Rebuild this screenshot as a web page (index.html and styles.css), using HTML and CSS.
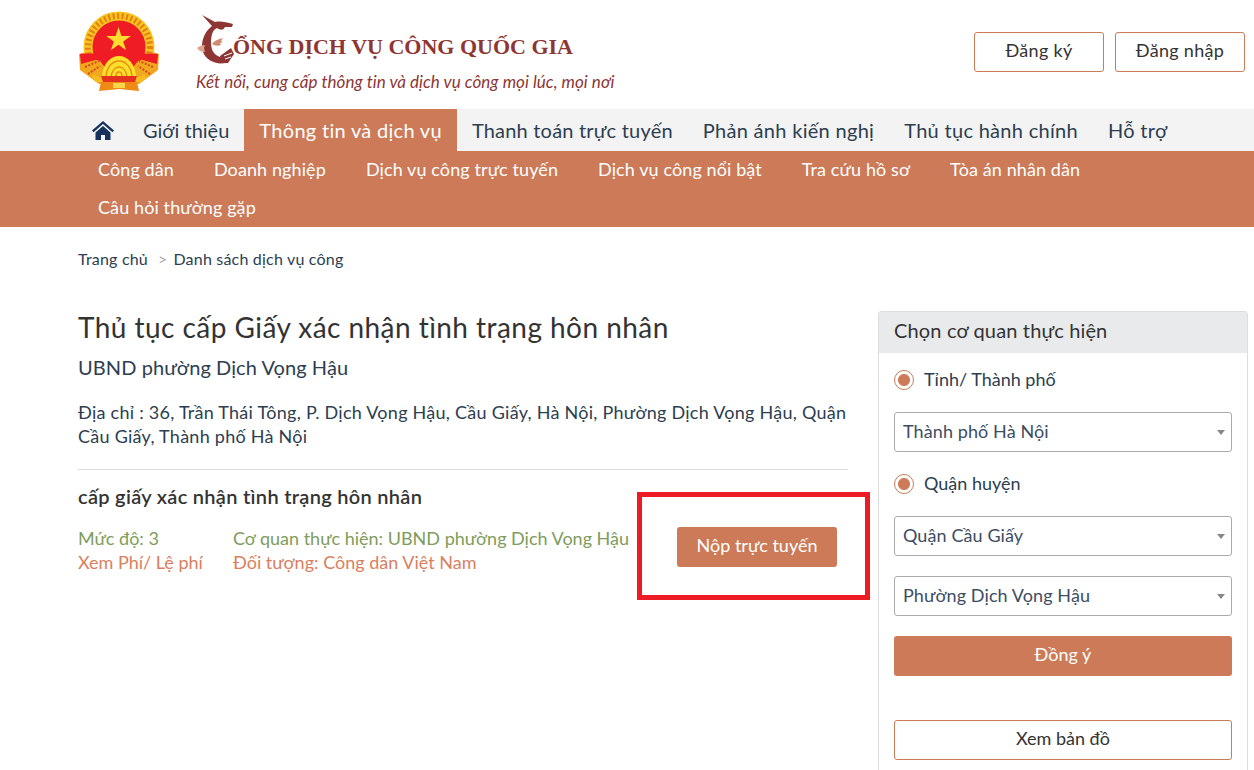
FILE: index.html
```html
<!DOCTYPE html>
<html lang="vi">
<head>
  <meta charset="UTF-8" />
  <title>Cổng dịch vụ công quốc gia</title>
  <link rel="stylesheet" href="styles.css">
</head>
<body>
  <header class="header">
    <div class="brand">
      <svg class="emblem" width="88" height="88" viewBox="0 -4 88 88">
        <path d="M24 72L5 58 4 42l10-3 60 0 10 3-1 16-19 14z" fill="#f2a51c"/>
        <circle cx="44" cy="35" r="31" fill="#ef1c25"/>
        <circle cx="44" cy="35" r="31" fill="none" stroke="#f7c51e" stroke-width="9"/>
        <circle cx="44" cy="35" r="31" fill="none" stroke="#e67d16" stroke-width="6" stroke-dasharray="2 2.500"/>
        <path d="M43.500 15l2.900 8.900h9.400l-7.600 5.500 2.900 8.900-7.600-5.500-7.600 5.500 2.900-8.900-7.600-5.500h9.400z" fill="#ffdc2e"/>
        <path d="M5 42l20 7 7 9-8 12-7-4L6 56z" fill="#f0a81e"/>
        <path d="M83 42l-20 7-7 9 8 12 7-4 11-10z" fill="#f0a81e"/>
        <path d="M5 42c8-1 18 0 27-2l-8 7-18 5z" fill="#ef1c25"/>
        <path d="M83 42c-8-1-18 0-27-2l8 7 18 5z" fill="#ef1c25"/>
        <path d="M10 55l14-6M13 62l12-8M78 55l-14-6M75 62l-12-8" stroke="#d9481a" stroke-width="2" stroke-dasharray="2 1.500"/>
        <g transform="translate(0 -4)">
          <path d="M27 68c1-12 8-20 17-20s16 8 17 20z" fill="#fbe02a"/>
          <path d="M31 68c1-9 6-15 13-15s12 6 13 15" fill="none" stroke="#ed8a18" stroke-width="1.500"/>
          <path d="M36 68c1-5 4-9 8-9s7 4 8 9" fill="none" stroke="#ed8a18" stroke-width="1.500"/>
          <path d="M41 68c0-2 1-4 3-4s3 2 3 4" fill="none" stroke="#ed8a18" stroke-width="1.500"/>
          <path d="M19 66c2 3 6 3 9 3h32c3 0 7 0 9-3l2 4c-2 4-6 4-9 4H26c-3 0-7 0-9-4z" fill="#f6bc20"/>
          <path d="M26 68h36l-2 6H28z" fill="#e3301f"/>
          <path d="M26 74h36l2 9-20-2-20 2z" fill="#f08a17"/>
          <path d="M38 75h12v5H38z" fill="#f7d64a"/>
        </g>
      </svg>
      <div class="brand-text">
        <div class="brand-name">
          <svg class="brand-mark" width="60" height="55" viewBox="0 0 60 55">
            <path d="M7 5l13 7c5-1 11 0 18 2l-1 3-7 0c-2 4-5 3-8 1-5 2-6 9-6 15 0 7 3 12 9 14l4 4 2 2C20 55 11 50 8 42 5 33 9 22 17 16z" fill="#8d3634"/>
            <path d="M25 46l11-8 3 6-6 9-7 0z" fill="#8d3634"/>
            <path d="M29 46l8-3M30 49l6-2" stroke="#fff" stroke-width="1"/>
            <path d="M2 38c2-2 5-3 8-3l-1 3 1 4c-3 0-6-1-8-4z" fill="#dca58d"/>
            <path d="M17 34c2-3 6-5 11-6l-2 3 2 1-3 1 1 2c-3 1-6 1-9-1z" fill="#cf8c73"/>
          </svg>
          <span class="brand-title">ỔNG DỊCH VỤ CÔNG QUỐC GIA</span>
        </div>
        <div class="brand-sub">Kết nối, cung cấp thông tin và dịch vụ công mọi lúc, mọi nơi</div>
      </div>
    </div>
    <div class="auth">
      <a href="#" class="btn-outline">Đăng ký</a>
      <a href="#" class="btn-outline">Đăng nhập</a>
    </div>
  </header>

  <nav class="nav">
    <a href="#" class="nav-home">
      <svg width="22" height="19" viewBox="0 0 22 19">
        <path d="M11 0L0 9.500l1.500 1.700L11 3l9.500 8.200L22 9.500z" fill="#16325c"/>
        <path d="M11 5L3.500 11.400V19H9v-5h4v5h5.500v-7.600z" fill="#16325c"/>
      </svg>
    </a>
    <a href="#" class="nav-item nav-first">Giới thiệu</a>
    <a href="#" class="nav-item active">Thông tin và dịch vụ</a>
    <a href="#" class="nav-item nav-tight">Thanh toán trực tuyến</a>
    <a href="#" class="nav-item">Phản ánh kiến nghị</a>
    <a href="#" class="nav-item">Thủ tục hành chính</a>
    <a href="#" class="nav-item">Hỗ trợ</a>
  </nav>

  <div class="subnav">
    <a href="#">Công dân</a>
    <a href="#">Doanh nghiệp</a>
    <a href="#">Dịch vụ công trực tuyến</a>
    <a href="#">Dịch vụ công nổi bật</a>
    <a href="#">Tra cứu hồ sơ</a>
    <a href="#">Tòa án nhân dân</a>
    <a href="#">Câu hỏi thường gặp</a>
  </div>

  <div class="breadcrumb">
    <a href="#">Trang chủ</a>
    <span class="sep">&gt;</span>
    <a href="#">Danh sách dịch vụ công</a>
  </div>

  <div class="content">
    <main class="detail">
      <h1>Thủ tục cấp Giấy xác nhận tình trạng hôn nhân</h1>
      <div class="agency">UBND phường Dịch Vọng Hậu</div>
      <p class="address">Địa chỉ : 36, Trần Thái Tông, P. Dịch Vọng Hậu, Cầu Giấy, Hà Nội, Phường Dịch Vọng Hậu, Quận Cầu Giấy, Thành phố Hà Nội</p>
      <h2>cấp giấy xác nhận tình trạng hôn nhân</h2>
      <div class="service">
        <div class="service-info">
          <span class="green">Mức độ: 3</span>
          <span class="green">Cơ quan thực hiện: UBND phường Dịch Vọng Hậu</span>
          <a href="#" class="orange">Xem Phí/ Lệ phí</a>
          <span class="orange">Đối tượng: Công dân Việt Nam</span>
        </div>
        <button class="btn-submit">Nộp trực tuyến</button>
      </div>
      <div class="highlight"></div>
    </main>

    <aside class="sidebar">
      <div class="sidebar-head">Chọn cơ quan thực hiện</div>
      <div class="sidebar-body">
        <label class="radio"><span class="radio-dot"></span>Tỉnh/ Thành phố</label>
        <div class="select">Thành phố Hà Nội</div>
        <label class="radio"><span class="radio-dot"></span>Quận huyện</label>
        <div class="select">Quận Cầu Giấy</div>
        <div class="select">Phường Dịch Vọng Hậu</div>
        <button class="btn-agree">Đồng ý</button>
        <button class="btn-map">Xem bản đồ</button>
      </div>
    </aside>
  </div>
</body>
</html>
```

FILE: styles.css
```css
* {
  box-sizing: border-box;
}

html,
body {
  height: 770px;
  overflow: hidden;
}

body {
  margin: 0;
  font-family: "Lato", "Noto Sans", sans-serif;
  font-size: 18px;
  background: #fff;
  color: #2c3e50;
}

a {
  color: inherit;
  text-decoration: none;
}

.header {
  height: 109px;
  display: flex;
  justify-content: space-between;
  padding: 8px 9px 0 75px;
}

.brand {
  display: flex;
}

.emblem {
  margin-right: 32px;
}

.brand-text {
  padding-top: 2px;
}

.brand-name {
  display: flex;
  align-items: flex-start;
  height: 55px;
  color: #8d3634;
}

.brand-mark {
  margin-right: -22px;
}

.brand-title {
  margin-top: 20px;
  font-family: "Liberation Serif", serif;
  font-weight: 700;
  font-size: 22px;
  line-height: 34px;
}

.brand-sub {
  margin: 5px 0 0 1px;
  font-style: italic;
  font-size: 17px;
  line-height: 24px;
  letter-spacing: 0.05px;
  color: #8d3634;
}

.auth {
  display: flex;
  gap: 11px;
  padding-top: 24px;
}

.btn-outline {
  width: 130px;
  height: 40px;
  border: 1px solid #cc7a58;
  border-radius: 3px;
  color: #333;
  line-height: 35px;
  letter-spacing: 0.3px;
  text-align: center;
}

.nav {
  height: 42px;
  display: flex;
  align-items: stretch;
  padding-left: 92px;
  background: #f3f3f3;
  font-size: 20px;
}

.nav-home {
  display: flex;
  align-items: center;
  width: 36px;
}

.nav-item {
  padding: 0 15px;
  line-height: 42px;
  letter-spacing: 0.3px;
}

.nav-first {
  letter-spacing: 0;
}

.nav-tight {
  letter-spacing: 0.2px;
}

.nav-item.active {
  background: #cc7a58;
  color: #fff;
}

.subnav {
  height: 76px;
  display: flex;
  flex-wrap: wrap;
  align-content: flex-start;
  gap: 0 40px;
  padding: 0 150px 0 98px;
  background: #cc7a58;
  color: #fff;
  letter-spacing: 0.1px;
}

.subnav a {
  margin: -1px 0 1px;
  line-height: 38px;
}

.breadcrumb {
  padding: 22px 78px 0;
  font-size: 16px;
  line-height: 20px;
  letter-spacing: 0.2px;
  display: flex;
  gap: 10px;
}

.breadcrumb .sep {
  margin-right: -4px;
  color: #aaa;
}

.content {
  display: flex;
  align-items: flex-start;
  gap: 30px;
  padding: 42px 6px 0 78px;
}

.detail {
  position: relative;
  width: 770px;
}

h1 {
  margin: -2px 0 0;
  font-size: 28px;
  font-weight: 400;
  line-height: 36px;
  letter-spacing: 0.45px;
  color: #333;
}

.agency {
  margin-top: 9px;
  font-size: 20px;
  line-height: 26px;
  letter-spacing: 0.08px;
}

.address {
  margin: 20px 0 0;
  padding-bottom: 21px;
  border-bottom: 1px solid #ddd;
  line-height: 24px;
  letter-spacing: 0.26px;
}

h2 {
  margin: 14px 0 0;
  font-size: 20px;
  font-weight: 600;
  line-height: 24px;
  letter-spacing: 0.3px;
  color: #333;
}

.service {
  display: flex;
  align-items: flex-start;
  margin-top: 18px;
}

.service-info {
  display: grid;
  grid-template-columns: 155px 1fr;
  width: 552px;
  line-height: 24px;
  white-space: nowrap;
}

.green {
  color: #7e9c5c;
}

.orange {
  color: #d9805f;
}

.btn-submit {
  width: 160px;
  height: 40px;
  margin: 1px 0 0 47px;
  padding-bottom: 5px;
  border: none;
  border-radius: 3px;
  background: #cc7a58;
  color: #fff;
  font: inherit;
}

.highlight {
  position: absolute;
  left: 559px;
  top: 181px;
  width: 233px;
  height: 108px;
  border: 5px solid #ed1c24;
}

.sidebar {
  width: 370px;
  height: 600px;
  border: 1px solid #ddd;
  border-radius: 3px;
}

.sidebar-head {
  height: 41px;
  padding-left: 15px;
  background: #e9eaec;
  font-size: 20px;
  letter-spacing: 0.15px;
  line-height: 37px;
  color: #333;
}

.sidebar-body {
  padding: 15px 15px 0;
}

.radio {
  display: flex;
  align-items: center;
  height: 24px;
  margin-bottom: 20px;
  padding-bottom: 2px;
}

.radio-dot {
  width: 20px;
  height: 20px;
  margin: 2px 10px 0 0;
  border: 1px solid #cc7a58;
  border-radius: 50%;
  background: radial-gradient(circle, #cc7a58 0 5.5px, #fff 6.5px);
}

.select {
  position: relative;
  height: 40px;
  margin-bottom: 20px;
  padding-left: 8px;
  border: 1px solid #aaa;
  border-radius: 3px;
  line-height: 36px;
  letter-spacing: 0.1px;
  color: #3d4d63;
}

.select::after {
  content: "";
  position: absolute;
  right: 6px;
  top: 17px;
  border: 4px solid transparent;
  border-top: 5px solid #888;
}

.btn-agree,
.btn-map {
  display: block;
  width: 100%;
  height: 40px;
  padding-bottom: 5px;
  border-radius: 3px;
  font: inherit;
}

.btn-agree {
  border: none;
  background: #cc7a58;
  color: #fff;
  margin-bottom: 44px;
}

.btn-map {
  border: 1px solid #cc7a58;
  background: #fff;
  color: #333;
}
```
